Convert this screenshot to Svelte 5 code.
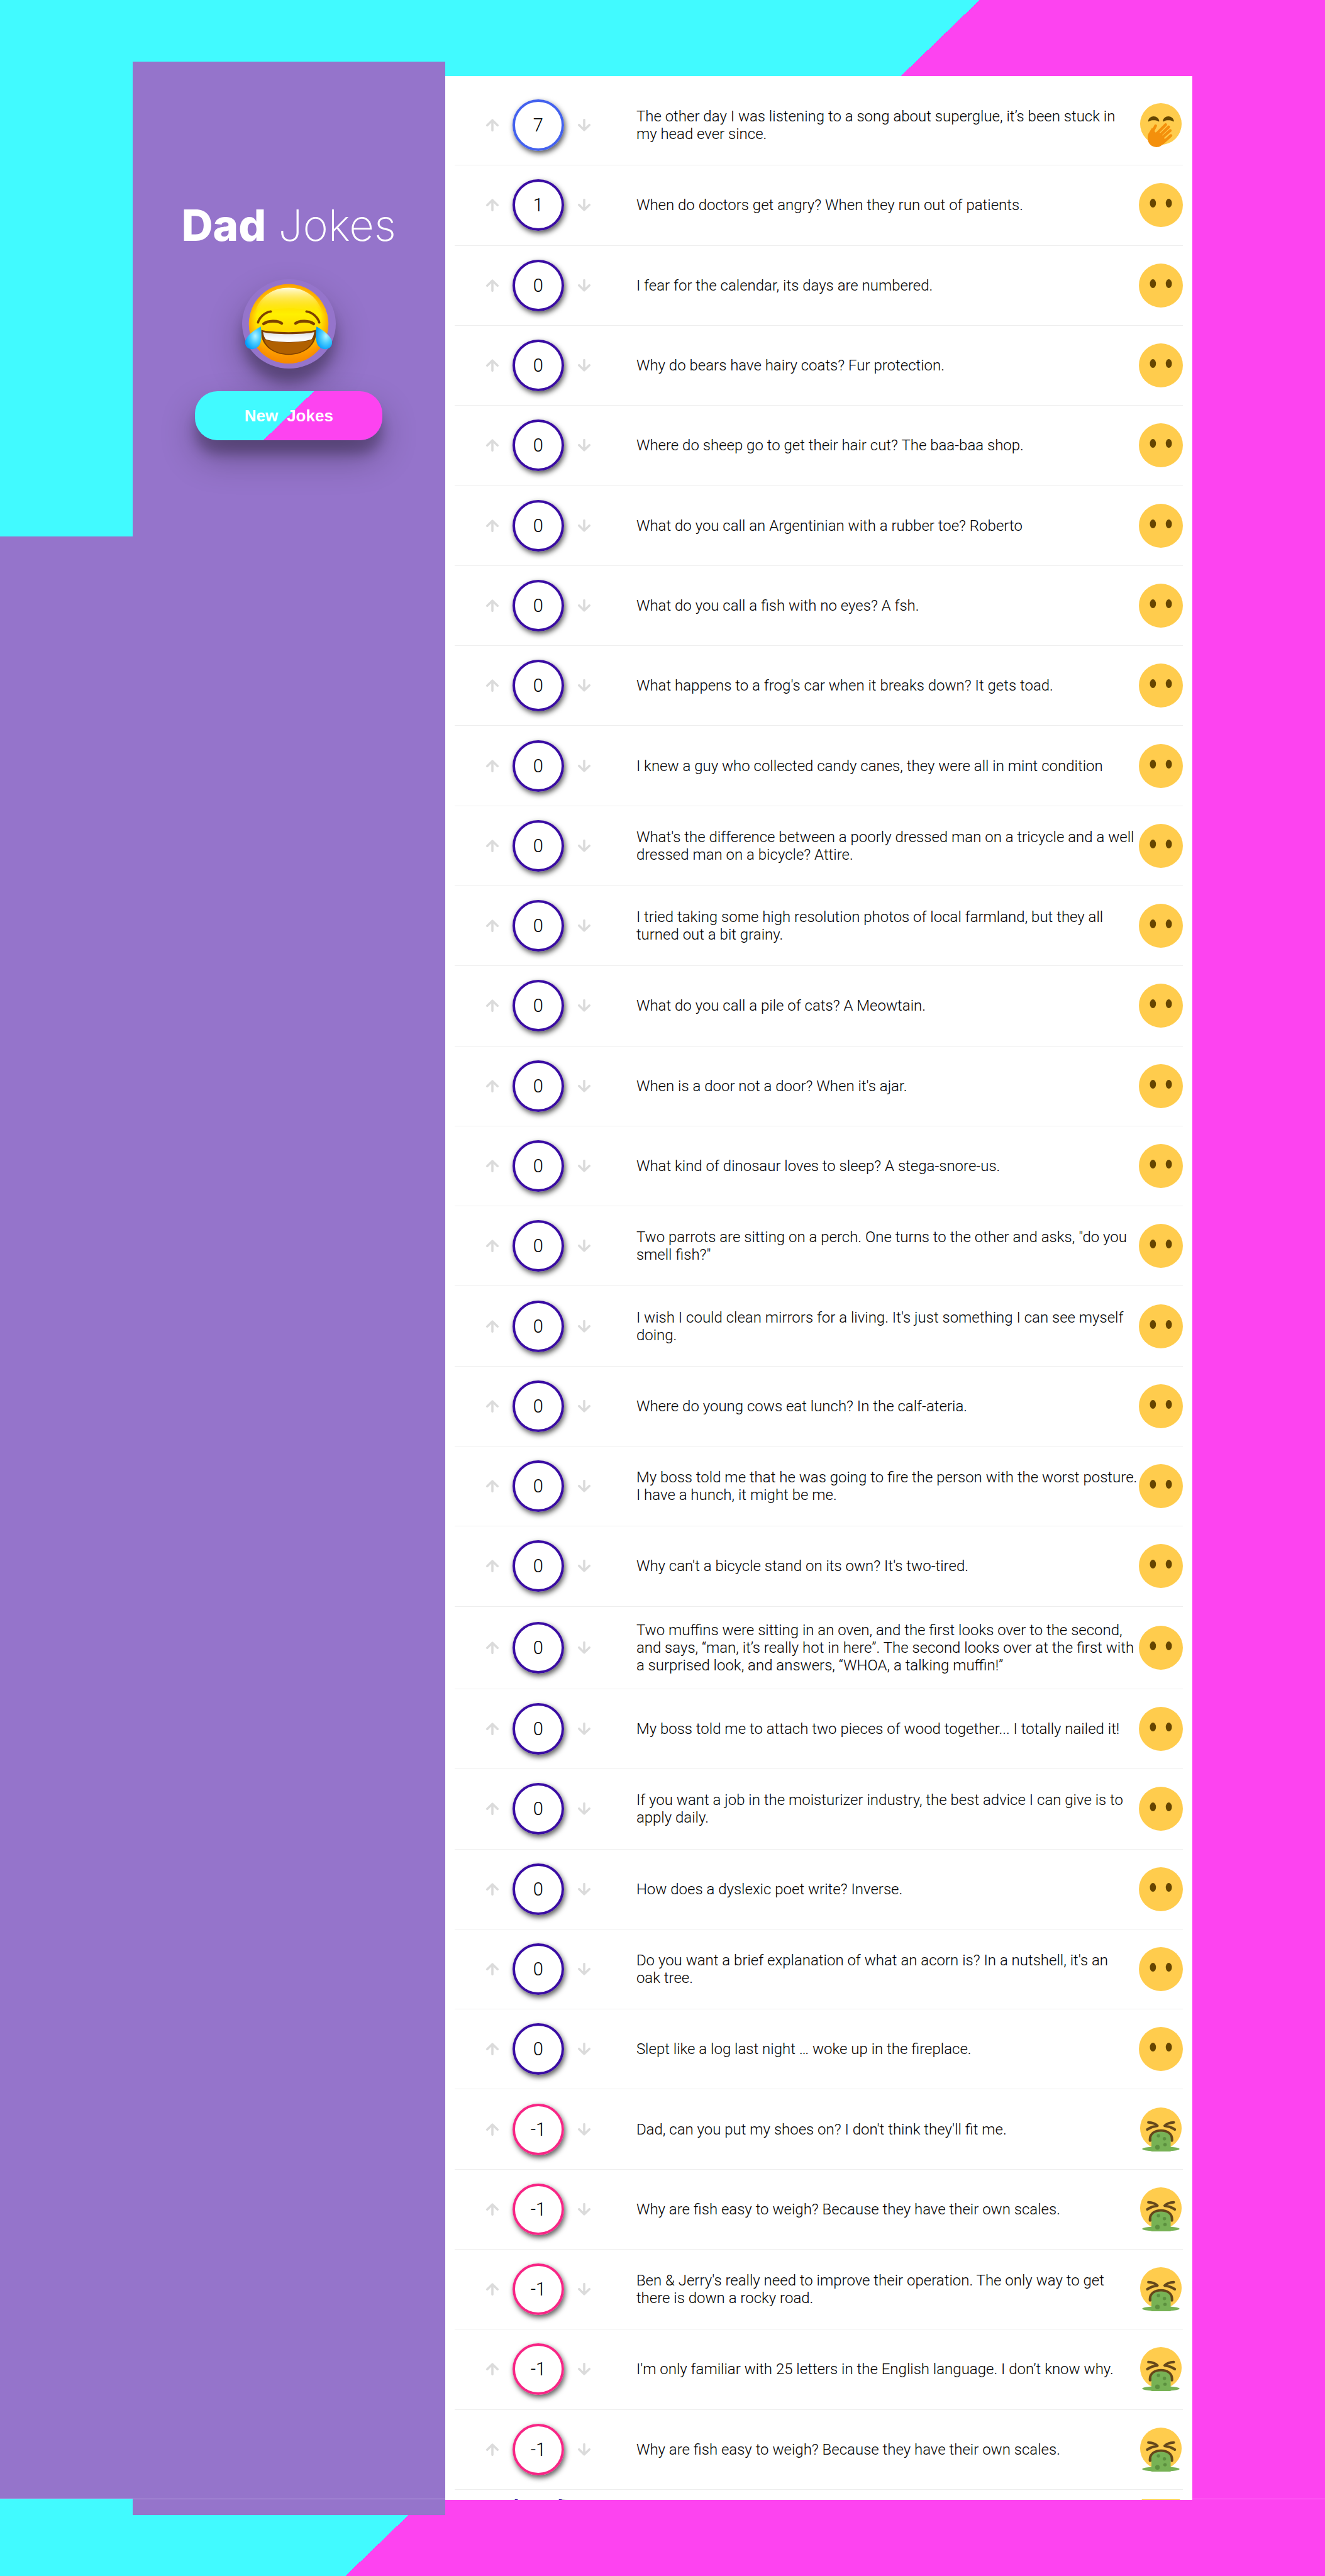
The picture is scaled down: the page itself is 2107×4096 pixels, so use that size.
<script>
  const jokes = [
    { votes: 7, lines: ['The other day I was listening to a song about superglue, it’s been stuck in', 'my head ever since.'] },
    { votes: 1, lines: ['When do doctors get angry? When they run out of patients.'] },
    { votes: 0, lines: ['I fear for the calendar, its days are numbered.'] },
    { votes: 0, lines: ['Why do bears have hairy coats? Fur protection.'] },
    { votes: 0, lines: ['Where do sheep go to get their hair cut? The baa-baa shop.'] },
    { votes: 0, lines: ['What do you call an Argentinian with a rubber toe? Roberto'] },
    { votes: 0, lines: ['What do you call a fish with no eyes? A fsh.'] },
    { votes: 0, lines: ["What happens to a frog's car when it breaks down? It gets toad."] },
    { votes: 0, lines: ['I knew a guy who collected candy canes, they were all in mint condition'] },
    { votes: 0, lines: ["What's the difference between a poorly dressed man on a tricycle and a well", 'dressed man on a bicycle? Attire.'] },
    { votes: 0, lines: ['I tried taking some high resolution photos of local farmland, but they all', 'turned out a bit grainy.'] },
    { votes: 0, lines: ['What do you call a pile of cats? A Meowtain.'] },
    { votes: 0, lines: ["When is a door not a door? When it's ajar."] },
    { votes: 0, lines: ['What kind of dinosaur loves to sleep? A stega-snore-us.'] },
    { votes: 0, lines: ['Two parrots are sitting on a perch. One turns to the other and asks, "do you', 'smell fish?"'] },
    { votes: 0, lines: ["I wish I could clean mirrors for a living. It's just something I can see myself", 'doing.'] },
    { votes: 0, lines: ['Where do young cows eat lunch? In the calf-ateria.'] },
    { votes: 0, lines: ['My boss told me that he was going to fire the person with the worst posture.', 'I have a hunch, it might be me.'] },
    { votes: 0, lines: ["Why can't a bicycle stand on its own? It's two-tired."] },
    { votes: 0, lines: ['Two muffins were sitting in an oven, and the first looks over to the second,', 'and says, “man, it’s really hot in here”. The second looks over at the first with', 'a surprised look, and answers, “WHOA, a talking muffin!”'] },
    { votes: 0, lines: ['My boss told me to attach two pieces of wood together... I totally nailed it!'] },
    { votes: 0, lines: ['If you want a job in the moisturizer industry, the best advice I can give is to', 'apply daily.'] },
    { votes: 0, lines: ['How does a dyslexic poet write? Inverse.'] },
    { votes: 0, lines: ["Do you want a brief explanation of what an acorn is? In a nutshell, it's an", 'oak tree.'] },
    { votes: 0, lines: ['Slept like a log last night … woke up in the fireplace.'] },
    { votes: -1, lines: ["Dad, can you put my shoes on? I don't think they'll fit me."] },
    { votes: -1, lines: ['Why are fish easy to weigh? Because they have their own scales.'] },
    { votes: -1, lines: ["Ben & Jerry's really need to improve their operation. The only way to get", 'there is down a rocky road.'] },
    { votes: -1, lines: ["I'm only familiar with 25 letters in the English language. I don’t know why."] },
    { votes: -1, lines: ['Why are fish easy to weigh? Because they have their own scales.'] }
  ];

  const tone = (votes) => (votes > 5 ? 'good' : votes < 0 ? 'bad' : 'neutral');
</script>

{#snippet face(votes)}
  <svg class="face" viewBox="0 0 36 36" aria-hidden="true">
    {#if votes > 5}
      <circle cx="18" cy="17" r="17" fill="#ffcc4d" />
      <path fill="#664500" d="M7.6 14.6C8 12.3 9.9 10.8 12.1 10.8s4.2 1.5 4.600 3.800c.1.5-.6.5-1 .2C14.700 14.200 13.400 14 12.100 14s-2.600.2-3.500.8c-.4.3-1.100.3-1-.2zM19.600 14.600c.4-2.300 2.300-3.800 4.500-3.800s4.200 1.500 4.600 3.800c.1.5-.6.5-1 .2-1-.6-2.300-.8-3.600-.8s-2.600.2-3.500.8c-.4.3-1.100.3-1-.2z" />
      <path fill="none" stroke="#f4900c" stroke-width="2.300" stroke-linecap="round" d="M13.700 18.500 9.300 27M21.900 17.600 12.500 27M24.400 19.500 15 28.500M25.700 22.400 17 30M26.200 26.500 19 33" />
      <path fill="#f4900c" d="M8.400 24 10.800 20l2.700 3.900 3.800.4 1.800 1.900 1.900 2.800 2.200.6-3.200 3.600C18 35.200 16.700 36 14.400 36c-4.200 0-7.200-3.200-7.200-7.400 0-2 .3-3.400 1.200-4.600z" />
    {:else if votes < 0}
      <circle cx="18" cy="17" r="17" fill="#ffcc4d" />
      <g fill="none" stroke="#65471b" stroke-linecap="round" stroke-linejoin="round">
        <path stroke-width="2.100" d="M7.800 12.200c3 .1 5.800 1.200 7.400 2.800-3 .3-5.800 1.300-8.300 3M28.500 12.200c-3 .1-5.800 1.200-7.400 2.800 3 .3 5.800 1.300 8.300 3" />
        <path stroke-width="2.300" d="M9.200 27v-1c0-4.300 4-7 8.900-7s8.900 2.700 8.900 7v1" />
      </g>
      <ellipse cx="18" cy="34" rx="15.300" ry="2" fill="#77b255" />
      <path fill="#77b255" d="M10.300 36V25c0-3.200 3.600-5.200 7.800-5.200S26 21.800 26 25v11z" />
      <g fill="#5c903f">
        <circle cx="16" cy="23.100" r="1.400" /><circle cx="20.900" cy="25.600" r="1.400" />
        <circle cx="21.400" cy="30.400" r="1.400" /><circle cx="15.200" cy="32.500" r="1.900" />
      </g>
    {:else}
      <circle cx="18" cy="18" r="18" fill="#ffcc4d" />
      <ellipse cx="11.500" cy="16.500" rx="2.500" ry="3.600" fill="#664500" />
      <ellipse cx="24.500" cy="16.500" rx="2.500" ry="3.600" fill="#664500" />
    {/if}
  </svg>
{/snippet}

{#snippet row(joke)}
  <div class="row">
    <div class="votes">
      <button class="arrow" aria-label="Vote up">
        <svg viewBox="0 0 20 20"><path d="M10 18.300V2.500M1.800 10.300 10 2.200l8.200 8.100" /></svg>
      </button>
      <span class="score {tone(joke.votes)}">{joke.votes}</span>
      <button class="arrow" aria-label="Vote down">
        <svg viewBox="0 0 20 20"><path d="M10 1.700v15.800M1.800 9.700l8.200 8.100 8.200-8.100" /></svg>
      </button>
    </div>
    <p class="text">{joke.lines.join('\n')}</p>
    {@render face(joke.votes)}
  </div>
{/snippet}

<div class="page">
  <main class="board">
    <aside class="sidebar">
      <h1><strong>Dad</strong> Jokes</h1>
      <div class="badge">
        <svg class="laugh" viewBox="0 0 190 176" role="img" aria-label="Face with tears of joy">
          <defs>
            <linearGradient id="skin" x1="0" y1="0" x2="0" y2="1">
              <stop offset="0" stop-color="#ffb400" /><stop offset=".38" stop-color="#fff000" />
              <stop offset=".6" stop-color="#ffd500" /><stop offset=".82" stop-color="#ffa200" /><stop offset="1" stop-color="#f48a00" />
            </linearGradient>
            <radialGradient id="rim" cx=".5" cy=".48" r=".52">
              <stop offset=".78" stop-color="#ff9500" stop-opacity="0" /><stop offset="1" stop-color="#f58800" stop-opacity=".8" />
            </radialGradient>
            <linearGradient id="shine" x1="0" y1="0" x2="0" y2="1">
              <stop offset="0" stop-color="#fffde0" /><stop offset="1" stop-color="#fff200" stop-opacity="0" />
            </linearGradient>
            <radialGradient id="tear" cx=".62" cy=".42" r=".65">
              <stop offset="0" stop-color="#b4f4ff" /><stop offset=".45" stop-color="#4fcfff" /><stop offset="1" stop-color="#009dfb" />
            </radialGradient>
            <linearGradient id="teeth" x1="0" y1="0" x2="0" y2="1">
              <stop offset="0" stop-color="#dcdfe2" /><stop offset=".5" stop-color="#f5f6f7" /><stop offset="1" stop-color="#fff" />
            </linearGradient>
          </defs>
          <circle cx="95" cy="88" r="87" fill="url(#skin)" />
          <circle cx="95" cy="88" r="87" fill="url(#rim)" />
          <path fill="url(#shine)" d="M95 9c38 0 68 24 74 58-22-9-48-13-74-13s-52 4-74 13C27 33 57 9 95 9z" />
          <g fill="none" stroke="#7d4200" stroke-width="5" stroke-linecap="round">
            <path d="M28 85c3-11 14-22 28-24M162 85c-3-11-14-22-28-24" />
            <path stroke-width="6" d="M40 88c9-7 31-8 40-1M150 88c-9-7-31-8-40-1" />
          </g>
          <path fill="#7d3f00" d="M35 101c18 7 102 7 120 0 4 30-22 55-60 55s-64-25-60-55z" />
          <path fill="#b06000" d="M41 122c24 9 84 9 108 0-6 19-27 32-54 32s-48-13-54-32z" />
          <path fill="url(#teeth)" d="M39 106c22 6 90 6 112 0-1 7-3 12-6 16-24 8-76 8-100 0-3-4-5-9-6-16z" />
          <g fill="url(#tear)">
            <path d="M34 94c2 15 2 30-2 39-4 8-13 12-21 10-10-3-14-13-9-22 5-10 19-20 32-27z" />
            <path d="M156 94c-2 15-2 30 2 39 4 8 13 12 21 10 10-3 14-13 9-22-5-10-19-20-32-27z" />
          </g>
        </svg>
      </div>
      <button class="new"><span>New</span><span>Jokes</span></button>
    </aside>

    <ul class="list">
      {#each jokes as joke}
        <li>{@render row(joke)}</li>
      {/each}
      <li class="peek">{@render row({ votes: null, lines: [] })}</li>
    </ul>
  </main>
</div>

<style>
  :global(body) {
    margin: 0;
    font-family: Roboto, sans-serif;
    font-weight: 300;
    color: #000;
  }

  .page {
    --cyan: #41faff;
    --pink: #fd43f0;
    --violet: #9574cb;
    --split: linear-gradient(136deg, var(--cyan) 50%, var(--pink) 50%);
    position: relative;
    display: flex;
    justify-content: center;
    box-sizing: border-box;
    min-height: 100vh;
    padding: 121px 0;
    background:
      linear-gradient(var(--violet), var(--violet)) 0 853px / 33.6% calc(100% - 976px) no-repeat,
      var(--split) 0 0 / 100% 974px no-repeat,
      var(--split) 0 100% / 100% 974px no-repeat,
      var(--pink);
  }

  /* hairline above the footer band */
  .page::after {
    content: '';
    position: absolute;
    right: 0;
    bottom: 122px;
    left: 0;
    height: 1px;
    background: rgba(255, 255, 255, 0.35);
  }

  .board {
    display: grid;
    grid-template-columns: 497fr 1188fr;
    width: 80%;
  }

  .sidebar {
    display: flex;
    flex-direction: column;
    align-items: center;
    margin: -23px 0 -24px;
    padding-top: 212px;
    background: var(--violet);
    color: #fff;
  }

  h1 {
    margin: 0 0 38px;
    font-family: Inter, sans-serif;
    font-size: 69px;
    font-weight: 200;
    line-height: 96px;
    white-space: nowrap;
  }

  h1 strong {
    font-weight: 800;
  }

  .badge,
  .new {
    box-shadow: 0 28px 56px rgba(0, 0, 0, 0.3), 0 22px 18px rgba(0, 0, 0, 0.22);
  }

  .badge {
    display: flex;
    align-items: center;
    justify-content: center;
    width: 149px;
    height: 142px;
    border-radius: 50%;
  }

  .laugh {
    width: 138px;
  }

  .new {
    display: flex;
    align-items: center;
    justify-content: center;
    gap: 14px;
    width: 60%;
    height: 78px;
    margin-top: 36px;
    padding: 0;
    border: 0;
    border-radius: 36px;
    background: var(--split);
    color: #fff;
    font: 700 26px 'Liberation Sans', sans-serif;
  }

  .list {
    position: relative;
    z-index: 1;
    display: flex;
    flex-direction: column;
    margin: 0;
    padding: 15px 15px 0;
    background: #fff;
    list-style: none;
  }

  li {
    display: flex;
    flex: 1 0 auto;
    border-bottom: 1px solid #eee;
  }

  .row {
    display: flex;
    flex: 1;
    align-items: center;
    min-height: 126px;
  }

  .peek {
    flex: none;
    height: 1px;
    margin-top: 15px;
    border: 0;
    overflow: hidden;
  }

  .peek .row {
    height: 127px;
    margin-top: -45px;
  }

  .votes {
    display: flex;
    align-items: center;
    gap: 22px;
    padding: 0 73px 0 50px;
  }

  .arrow {
    display: flex;
    width: 20px;
    height: 20px;
    padding: 0;
    border: 0;
    background: none;
  }

  .arrow path {
    fill: none;
    stroke: #dbdbdb;
    stroke-width: 3.600;
    stroke-linecap: round;
    stroke-linejoin: round;
  }

  .score {
    display: flex;
    align-items: center;
    justify-content: center;
    box-sizing: border-box;
    width: 82px;
    height: 82px;
    border: 4px solid #3a0ca3;
    border-radius: 50%;
    box-shadow: 2px 4px 9px rgba(0, 0, 0, 0.65);
    font-size: 29px;
  }

  .score.good {
    border-color: #4361ee;
  }

  .score.bad {
    border-color: #f72585;
  }

  .text {
    flex: 1;
    min-width: 0;
    margin: 23px 0;
    font-size: 24px;
    line-height: 28px;
    white-space: pre;
  }

  .face {
    flex: none;
    width: 70px;
    height: 70px;
  }
</style>
